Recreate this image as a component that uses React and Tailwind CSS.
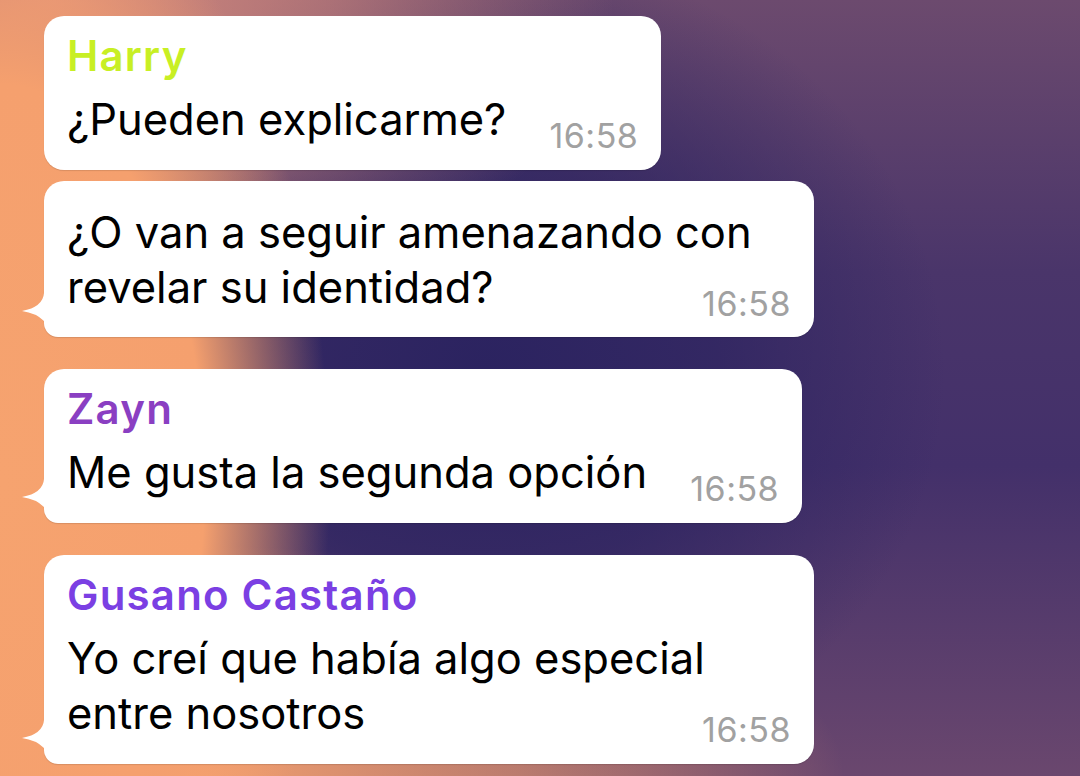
import React from "react";

function Tail() {
  return (
    <svg
      className="absolute left-[-23px] bottom-[12px]"
      width="26"
      height="32"
      viewBox="0 0 26 32"
    >
      <path d="M26 0 L23 0 Q22 14 1 18 Q15 20 23 28 L26 32 Z" fill="#ffffff" />
    </svg>
  );
}

function Bubble({ name, nameColor, lines, tail, wide }) {
  return (
    <div
      className={
        "relative bg-white rounded-[20px] px-[23px] shadow-[0_1px_1px_rgba(0,0,0,0.12)] " +
        (tail ? "rounded-bl-[14px] " : "") +
        (name ? "pt-[14px] pb-[23px] " : "pt-[24px] pb-[22px] ") +
        (wide ? "w-[770px]" : "w-fit")
      }
    >
      {tail && <Tail />}
      {name && (
        <div
          className="text-[42px] leading-[52px] font-semibold tracking-[1.2px]"
          style={{ color: nameColor }}
        >
          {name}
        </div>
      )}
      <div className={"grid " + (name ? "mt-[10px]" : "")}>
        <p className="col-start-1 row-start-1 text-[43.5px] leading-[55px] text-black whitespace-nowrap">
          {lines.map((l, i) => (
            <React.Fragment key={i}>
              {i > 0 && <br />}
              {l}
            </React.Fragment>
          ))}
          <span className="inline-block w-[132px]" />
        </p>
        <span className="col-start-1 row-start-1 self-end justify-self-end text-[34px] leading-[40px] tracking-[0.5px] text-[#a1a1a1] -mb-[9px]">
          16:58
        </span>
      </div>
    </div>
  );
}

export default function App() {
  return (
    <div
      className="w-[1080px] h-[776px] overflow-hidden flex flex-col items-start pl-[44px] pt-[16px] font-['Inter',sans-serif] bg-[radial-gradient(ellipse_330px_640px_at_0%_62%,#f6a36f_0%,#f5a06e_62%,rgba(245,160,110,0)_100%),radial-gradient(ellipse_650px_230px_at_18%_100%,#f3a06f_0%,rgba(243,160,111,0.6)_50%,rgba(243,160,111,0)_100%),radial-gradient(ellipse_560px_320px_at_5%_0%,#d88c7d_0%,rgba(216,140,125,0.6)_50%,rgba(216,140,125,0)_100%),radial-gradient(ellipse_460px_420px_at_45%_48%,#2b2360_0%,rgba(43,35,96,0.7)_50%,rgba(43,35,96,0)_100%),linear-gradient(to_bottom,#6c4a6e_0%,#4a356a_35%,#43306a_60%,#6a476e_100%)]"
    >
      <Bubble name="Harry" nameColor="#c8ef24" lines={["¿Pueden explicarme?"]} />
      <div className="h-[11px]" />
      <Bubble
        lines={["¿O van a seguir amenazando con", "revelar su identidad?"]}
        tail
        wide
      />
      <div className="h-[32px]" />
      <Bubble
        name="Zayn"
        nameColor="#8a3fc2"
        lines={["Me gusta la segunda opción"]}
        tail
      />
      <div className="h-[32px]" />
      <Bubble
        name="Gusano Castaño"
        nameColor="#7b3fe3"
        lines={["Yo creí que había algo especial", "entre nosotros"]}
        tail
        wide
      />
    </div>
  );
}
